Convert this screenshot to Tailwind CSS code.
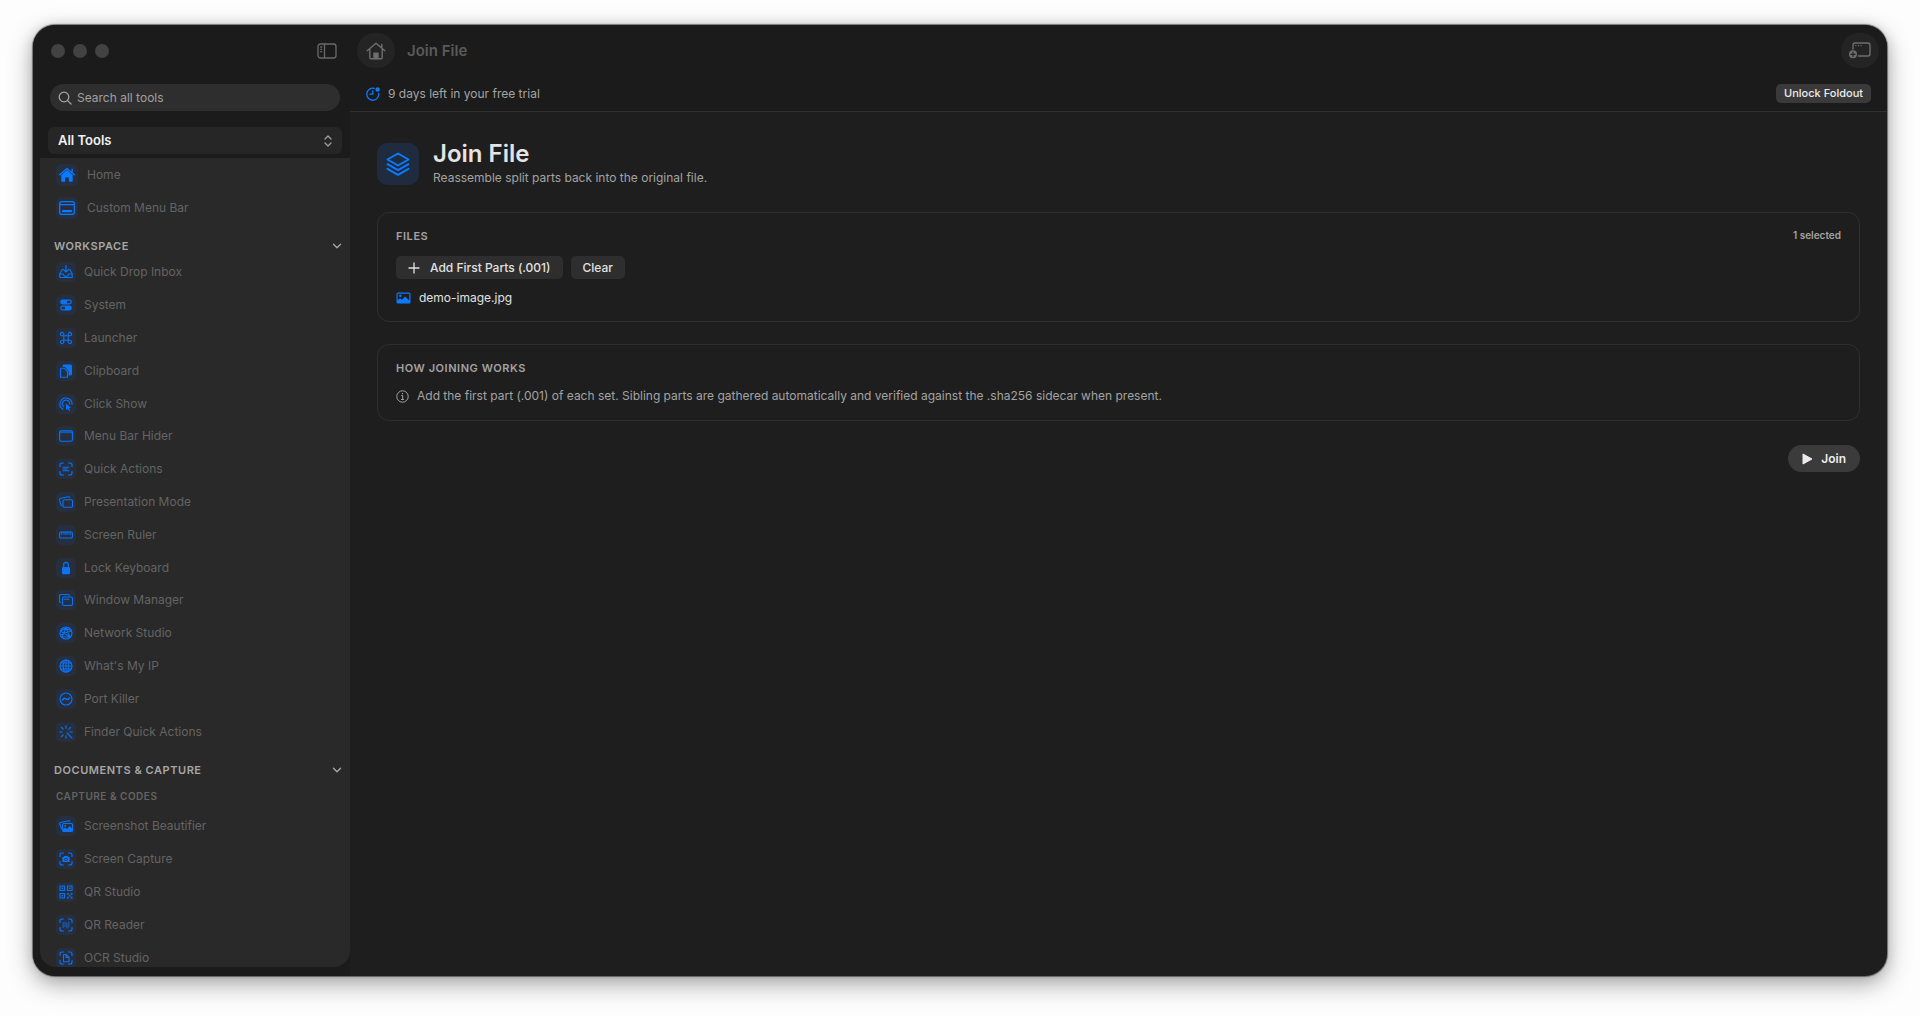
<!DOCTYPE html>
<html lang="en">

<head>
    <meta charset="UTF-8">
    <meta name="viewport" content="width=device-width, initial-scale=1.0">
    <title>Join File</title>
    <script src="https://cdn.jsdelivr.net/npm/@tailwindcss/browser@4"></script>
</head>

<body class="h-screen overflow-hidden bg-[#fdfdfd] px-[33px] pt-[25px] pb-10 font-['Inter','Liberation_Sans',sans-serif] text-xs text-[#a3a3a3]">
    <div class="relative flex h-full overflow-hidden rounded-[22px] bg-[#1e1e1e] shadow-[0_8px_24px_rgba(0,0,0,0.35),0_0_12px_rgba(0,0,0,0.12),0_0_1px_1px_rgba(90,95,95,0.7)]">

        <!-- sidebar -->
        <aside class="flex w-[317px] shrink-0 flex-col bg-[#1b1b1b]">
            <div class="flex h-[51px] items-center pr-[13px] pl-[18px]">
                <div class="flex gap-2">
                    <span class="size-3.5 rounded-full bg-[#424242]"></span>
                    <span class="size-3.5 rounded-full bg-[#424242]"></span>
                    <span class="size-3.5 rounded-full bg-[#424242]"></span>
                </div>
                <button type="button" aria-label="Toggle sidebar" class="ml-auto text-[#6a6a6a]">
                    <svg class="h-4 w-5" viewBox="0 0 20 16" fill="none" stroke="currentColor" stroke-width="1.3">
                        <rect x="1" y="1" width="18" height="14" rx="2.5" />
                        <path d="M7.5 1v14M3.2 4h2M3.2 6.3h2M3.2 8.6h2" />
                    </svg>
                </button>
            </div>
            <div class="pt-2 pr-[10px] pl-[17px]">
                <label class="flex h-[27px] items-center gap-[5px] rounded-full bg-[#2e2e2e] px-2">
                    <svg class="size-3.5 shrink-0" viewBox="0 0 14 14" fill="none" stroke="currentColor" stroke-width="1.3" stroke-linecap="round">
                        <circle cx="6" cy="6" r="4.8" />
                        <path d="M9.6 9.6l3.4 3.4" />
                    </svg>
                    <input type="text" placeholder="Search all tools" class="w-full bg-transparent outline-none placeholder:text-[#a0a0a0]">
                </label>
            </div>
            <div class="relative mt-4 mr-2 mb-1 ml-[15px]">
                <select aria-label="Tool group" class="h-[27px] w-full appearance-none rounded-md bg-[#262626] px-2.5 pt-px text-[13px] font-semibold text-[#f0f0f0]">
                    <option>All Tools</option>
                </select>
                <svg class="pointer-events-none absolute top-[8px] right-[10px] h-3 w-2" viewBox="0 0 8 12" fill="none" stroke="currentColor" stroke-width="1.2" stroke-linecap="round" stroke-linejoin="round">
                    <path d="M1 4l3-3 3 3M1 8l3 3 3-3" />
                </svg>
            </div>

            <nav class="mb-[9px] ml-[7px] min-h-0 flex-1 overflow-hidden rounded-b-[16px] bg-[#292929] text-[#646464]">
                <ul id="top"></ul>
                <button type="button" class="mt-3.5 flex h-4 w-full items-center justify-between pr-2 pl-3.5 text-[11px] font-semibold tracking-wider text-[#a6a6a6]">
                    WORKSPACE
                    <svg class="h-2 w-2.5" viewBox="0 0 10 8" fill="none" stroke="currentColor" stroke-width="1.4" stroke-linecap="round" stroke-linejoin="round"><path d="M1.5 2.2L5 5.7l3.5-3.5" /></svg>
                </button>
                <ul id="workspace" class="mt-0.5 grid h-[492px] auto-rows-fr"></ul>
                <button type="button" class="mt-3.5 flex h-4 w-full items-center justify-between pr-2 pl-3.5 text-[11px] font-semibold tracking-wider text-[#a6a6a6]">
                    DOCUMENTS &amp; CAPTURE
                    <svg class="h-2 w-2.5" viewBox="0 0 10 8" fill="none" stroke="currentColor" stroke-width="1.4" stroke-linecap="round" stroke-linejoin="round"><path d="M1.5 2.2L5 5.7l3.5-3.5" /></svg>
                </button>
                <h3 class="mt-2.5 h-4 pl-4 text-[10px] leading-4 font-semibold tracking-wider">CAPTURE &amp; CODES</h3>
                <ul id="capture" class="mt-1.5 grid h-[164px] auto-rows-fr"></ul>
            </nav>
        </aside>

        <!-- content -->
        <main class="flex min-w-0 flex-1 flex-col">
            <header class="border-b border-[#303030] bg-[#1b1b1b]">
                <div class="flex h-[51px] items-center pr-2 pl-[7px]">
                    <button type="button" aria-label="Home" class="flex h-[35px] w-[38px] items-center justify-center rounded-full bg-[#242424] text-[#6e6e6e]">
                        <svg class="h-[18px] w-5" viewBox="0 0 20 18" fill="none" stroke="currentColor" stroke-width="1.4" stroke-linecap="round" stroke-linejoin="round">
                            <path d="M1.2 8.8L10 1.2l8.8 7.6M3.8 7.5v8.3c0 .6.4 1 1 1h10.4c.6 0 1-.4 1-1V7.5M15.8 5.5V2.5" />
                            <path d="M8 16.5v-5.2h4v5.2z" fill="currentColor" />
                        </svg>
                    </button>
                    <h2 class="ml-3 text-[15px] font-semibold text-[#5a5a5a]">Join File</h2>
                    <button type="button" aria-label="New window" class="ml-auto flex h-[35px] w-[38px] items-center justify-center rounded-full bg-[#242424] text-[#6e6e6e]">
                        <svg class="h-[17px] w-[23px]" viewBox="0 0 23 17" fill="none" stroke="currentColor" stroke-width="1.4" stroke-linecap="round">
                            <path d="M4 7V3.2C4 1.900 4.900 1 6.200 1h12.600c1.300 0 2.200.9 2.200 2.200v8.600c0 1.300-.9 2.200-2.200 2.200H9.500" />
                            <path d="M6.800 3.600h.1M9.400 3.600h.1M12 3.600h.1" />
                            <circle cx="4" cy="12.300" r="4" fill="currentColor" stroke="none" />
                            <path d="M4 10.200v4.200M1.900 12.300h4.200" stroke="#242424" stroke-width="1.2" />
                        </svg>
                    </button>
                </div>
                <div class="flex h-[35px] items-center px-4">
                    <svg class="size-3.5 text-[#0a7aff]" viewBox="0 0 14 14" fill="none" stroke="currentColor" stroke-width="1.3" stroke-linecap="round">
                        <path d="M8.200 1.400A6 6 0 1 0 12.700 6.300" />
                        <path d="M6.800 3.800v3.400H4" />
                        <circle cx="11.600" cy="2.500" r="2.200" fill="currentColor" stroke="none" />
                    </svg>
                    <span class="ml-2">9 days left in your free trial</span>
                    <button type="button" class="ml-auto h-[19px] rounded-[5px] bg-[#3a3a3a] px-2 text-[11px] font-medium text-[#ececec]">Unlock Foldout</button>
                </div>
            </header>

            <div class="flex flex-col px-[27px] pt-7">
                <div class="flex items-center gap-3.5">
                    <div class="flex size-[42px] items-center justify-center rounded-[10px] bg-[#1f2b3f] text-[#0a7aff]">
                        <svg class="size-6" viewBox="0 0 24 24" fill="none" stroke="currentColor" stroke-width="2" stroke-linecap="round" stroke-linejoin="round">
                            <path d="M12 1.500l10.500 6L12 13.500 1.500 7.500zM1.500 12.200l10.500 6 10.500-6M1.500 16.800l10.500 6 10.500-6" />
                        </svg>
                    </div>
                    <div>
                        <h1 class="text-2xl leading-7 font-semibold text-[#e4e4e4]">Join File</h1>
                        <p class="leading-5">Reassemble split parts back into the original file.</p>
                    </div>
                </div>

                <section class="mt-6 rounded-xl border border-[#303030] px-[18px] pt-[15px] pb-3.5">
                    <div class="flex h-4 items-center justify-between">
                        <h2 class="text-[11px] font-semibold tracking-wider">FILES</h2>
                        <span class="text-[10px] font-semibold">1 selected</span>
                    </div>
                    <div class="mt-3 flex gap-2 font-medium text-[#e2e2e2]">
                        <button type="button" class="flex h-[23px] items-center gap-2.5 rounded-[5px] bg-[#2e2e2e] px-3">
                            <svg class="size-3" viewBox="0 0 12 12" fill="none" stroke="currentColor" stroke-width="1.3" stroke-linecap="round"><path d="M6 1v10M1 6h10" /></svg>
                            Add First Parts (.001)
                        </button>
                        <button type="button" class="h-[23px] rounded-[5px] bg-[#2e2e2e] px-3">Clear</button>
                    </div>
                    <div class="mt-2.5 flex h-[18px] items-center gap-2 text-[#e2e2e2]">
                        <svg class="h-3 w-[15px] text-[#0a7aff]" viewBox="0 0 15 12">
                            <path fill="currentColor" fill-rule="evenodd" d="M2 .5h11A1.500 1.500 0 0 1 14.500 2v8a1.500 1.500 0 0 1-1.500 1.500H2A1.500 1.500 0 0 1 .5 10V2A1.500 1.500 0 0 1 2 .5zM1.700 1.700v6.500l2.300-2 2 1.600 3.200-3.200 4.100 3.800V1.700zM4.300 2.600a1.200 1.200 0 1 1 0 2.400 1.200 1.200 0 0 1 0-2.400z" />
                        </svg>
                        demo-image.jpg
                    </div>
                </section>

                <section class="mt-[22px] rounded-xl border border-[#2e2e2e] px-[18px] pt-[15px] pb-3.5">
                    <h2 class="h-4 text-[11px] leading-4 font-semibold tracking-wider">HOW JOINING WORKS</h2>
                    <p class="mt-2.5 flex h-5 items-center gap-2">
                        <svg class="size-[13px]" viewBox="0 0 13 13" fill="none" stroke="currentColor">
                            <circle cx="6.500" cy="6.500" r="5.700" />
                            <path d="M5.300 5.500h1.400v4M5 9.500h3M6.500 3v1.200" />
                        </svg>
                        Add the first part (.001) of each set. Sibling parts are gathered automatically and verified against the .sha256 sidecar when present.
                    </p>
                </section>

                <button type="button" class="mt-6 flex h-[27px] items-center gap-2 self-end rounded-full bg-[#3b3b3b] px-3.5 text-xs font-semibold text-[#ececec]">
                    <svg class="h-3 w-[11px]" viewBox="0 0 11 12" fill="currentColor" stroke="currentColor" stroke-linejoin="round"><path d="M1 1v10l9-5z" /></svg>
                    Join
                </button>
            </div>
        </main>
    </div>

    <script>
        const corners = '<path d="M1 4.500V3a2 2 0 0 1 2-2h1.500M9.500 1H11a2 2 0 0 1 2 2v1.500M13 9.500V11a2 2 0 0 1-2 2H9.500M4.500 13H3a2 2 0 0 1-2-2V9.500"/>'
        const solid = 'fill="currentColor" stroke="none"'

        const pinned = [
            ['Home', `<path ${solid} d="M7 2.600l5 4.300v5.300c0 .5-.3.800-.8.800H8.600V9.200H5.400V13H2.800c-.5 0-.8-.3-.8-.8V6.900z"/><path d="M.6 6.800L7 1.300l6.400 5.500M11.500 4.600V1.800"/>`],
            ['Custom Menu Bar', `<rect x=".6" y="1.500" width="12.800" height="11" rx="1.800"/><path d="M1 4h12"/><path d="M3.500 9.800h7" stroke-width="2"/>`],
        ]
        const workspace = [
            ['Quick Drop Inbox', '<path d="M4.500 4.500H3.200L.8 8.800V12.500h12.400V8.800L10.800 4.500H9.500M.8 9h3.700a2.500 2.500 0 0 0 5 0h3.700M7 .5v6.300M4.900 5L7 7l2.100-2"/>'],
            ['System', `<path ${solid} fill-rule="evenodd" d="M3.600 1.500h6.800a2.400 2.400 0 0 1 0 4.900H3.600a2.400 2.400 0 0 1 0-4.900zM8 2.700v2.500h2.300a1.250 1.250 0 0 0 0-2.500zM3.600 7.600h6.800a2.400 2.400 0 0 1 0 4.900H3.600a2.400 2.400 0 0 1 0-4.900zM3.700 8.800a1.250 1.250 0 0 0 0 2.500H6V8.800z"/>`],
            ['Launcher', '<path d="M4.800 4.800h4.400v4.400H4.800zM4.800 4.800H3.300a1.700 1.700 0 1 1 1.500-1.500zM9.200 4.800V3.300a1.700 1.700 0 1 1 1.500 1.500zM9.200 9.200h1.500a1.700 1.700 0 1 1-1.500 1.500zM4.800 9.200v1.500a1.700 1.700 0 1 1-1.500-1.500z"/>'],
            ['Clipboard', `<path ${solid} d="M5 .5h6.500c.8 0 1.500.7 1.500 1.500v8c0 .8-.7 1.500-1.500 1.500H9.500V7L6 3H3.800V1.800C3.800 1 4.300.5 5 .5z"/><path d="M2.300 4.300H5.500L8.500 7.500V13.200h-7V5c0-.4.400-.7.800-.7z"/>`],
            ['Click Show', `<path d="M4 12.300A6 6 0 1 1 13 7.500M4.600 9.700A3.700 3.700 0 1 1 10.700 7"/><path ${solid} d="M6.800 6.500l5.400 4.300-2.300.3 1.300 2.300-1.200.6-1.200-2.400-1.700 1.400z"/>`],
            ['Menu Bar Hider', `<rect x=".6" y="1.800" width="12.800" height="10.400" rx="1.800"/><path d="M1 3.300h12" stroke-width="2" opacity=".6"/>`],
            ['Quick Actions', corners + '<path d="M4 5.200h6M4 7h4.500M4 8.800h6"/>'],
            ['Presentation Mode', '<rect x="4" y="4.800" width="9.500" height="7.500" rx="1.300"/><path d="M2.800 10.500C1.500 10 1.500 9 1.300 8L.6 4.800C.5 4 1 3.400 1.700 3.300l7.500-1.500c.7-.1 1.300.3 1.500 1"/>'],
            ['Screen Ruler', '<rect x=".6" y="4" width="12.800" height="6" rx="1.300"/><path d="M2.800 4v2.500M5 4v2M7 4v2.500M9 4v2M11.200 4v2.500"/>'],
            ['Lock Keyboard', `<rect ${solid} x="3" y="6" width="8" height="7.300" rx="1.200"/><path d="M4.700 6.500V3.700a2.300 2.300 0 0 1 4.600 0v2.800"/>`],
            ['Window Manager', '<rect x="3.500" y="4" width="10" height="8.500" rx="1.500"/><path d="M1.800 9.800C.9 9.600.5 9 .5 8.300V3c0-.8.600-1.500 1.500-1.500h7c.8 0 1.300.4 1.500 1.200M5 6.200h5"/>'],
            ['Network Studio', '<circle cx="7" cy="7" r="6"/><path d="M1.500 5l5.500-3 5.500 3M3 11L7 2l4 9M1.200 8.500L12.500 5M1.500 5L11 11M3 11h8"/>'],
            ["What's My IP", '<circle cx="7" cy="7" r="6"/><ellipse cx="7" cy="7" rx="2.800" ry="6"/><path d="M7 1v12M1 7h12M2 4h10M2 10h10"/>'],
            ['Port Killer', '<circle cx="7" cy="7" r="6"/><path d="M3.600 8c1.400-2.400 2.400-1.800 3.400-1s2 1 3.400-1" stroke-width="1.600"/>'],
            ['Finder Quick Actions', '<path d="M7 .8v2.400M7 10.800v2.400M.8 7h2.400M10.800 7h2.400M2.500 2.500l1.700 1.700M11.500 2.500L9.800 4.200M2.500 11.500l1.700-1.700M8 8l5 5"/>'],
        ]
        const capture = [
            ['Screenshot Beautifier', `<rect x="3.500" y="4.500" width="10" height="8" rx="1.300"/><path d="M2.500 9.500L.7 5c-.2-.8.200-1.300.9-1.500l8-1.800c.6-.1 1 .2 1.200.8"/><path ${solid} d="M3.500 10.500l2.500-2 2 1.500 2.500-2.800 3 2.300v3h-10z"/><circle ${solid} cx="6.200" cy="6.700" r="1"/>`],
            ['Screen Capture', corners + `<path ${solid} fill-rule="evenodd" d="M5.200 4h3.600l.6 1h1.200v5H3.400V5h1.200zM7 5.700a1.700 1.700 0 1 0 0 3.400 1.700 1.700 0 0 0 0-3.400z"/><circle ${solid} cx="7" cy="7.400" r="1"/>`],
            ['QR Studio', `<path d="M1 1h4.500v4.500H1zM8.500 1H13v4.500H8.500zM1 8.500h4.500V13H1z"/><path ${solid} d="M2.500 2.500H4V4H2.500zM10 2.500h1.500V4H10zM2.500 10H4v1.500H2.500zM8 8h1.700v1.700H8zM11.800 8h1.700v1.700h-1.700zM9.900 9.900h1.700v1.700H9.900zM8 11.800h1.700v1.700H8zM11.800 11.800h1.700v1.700h-1.700z"/>`],
            ['QR Reader', corners + '<path d="M4.200 4.500v5M6 4v4.500M7.900 5v5M9.800 4v5" opacity=".75"/>'],
            ['OCR Studio', corners + '<path d="M4.500 3.500h2.500l3 3v4.300H4.500zM7 3.500v3h3"/>'],
        ]

        const icon = (body) => `<svg class="size-3.5" viewBox="0 0 14 14" fill="none" stroke="currentColor" stroke-width="1.1" stroke-linecap="round" stroke-linejoin="round">${body}</svg>`

        document.getElementById('top').innerHTML = pinned.map(([name, body]) => `
            <li><a href="#" class="flex h-[33px] items-center gap-[9px] pl-4">
                <span class="flex size-[22px] items-center justify-center rounded-[5px] bg-[#252f40] text-[#0a7aff] [&>svg]:size-4">${icon(body)}</span>${name}
            </a></li>`).join('')

        const rows = (list) => list.map(([name, body]) => `
            <li class="flex items-center"><a href="#" class="flex w-full items-center gap-2 pl-4">
                <span class="flex size-5 items-center justify-center rounded-[5px] bg-[#252f40] text-[#0a74f5]">${icon(body)}</span>${name}
            </a></li>`).join('')
        document.getElementById('workspace').innerHTML = rows(workspace)
        document.getElementById('capture').innerHTML = rows(capture)
    </script>
</body>

</html>
